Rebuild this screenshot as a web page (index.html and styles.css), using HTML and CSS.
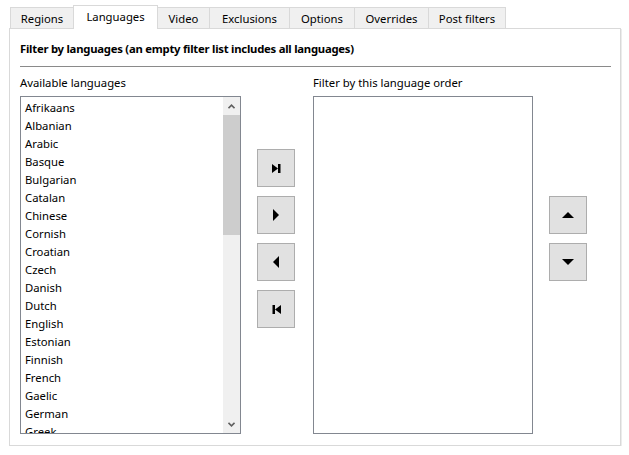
FILE: index.html
```html
<!DOCTYPE html>
<html>
<head>
<meta charset="utf-8">
<link rel="stylesheet" href="styles.css">
</head>
<body>
<div class="tabs">
  <div class="tab t1">Regions</div>
  <div class="tab t2 active">Languages</div>
  <div class="tab t3">Video</div>
  <div class="tab t4">Exclusions</div>
  <div class="tab t5">Options</div>
  <div class="tab t6">Overrides</div>
  <div class="tab t7">Post filters</div>
</div>
<div class="panel">
  <div class="heading">Filter by languages (an empty filter list includes all languages)</div>
  <div class="separator"></div>
  <div class="row">
    <div class="col">
      <div class="label">Available languages</div>
      <div class="list">
        <div class="items">
          <div class="item">Afrikaans</div>
          <div class="item">Albanian</div>
          <div class="item">Arabic</div>
          <div class="item">Basque</div>
          <div class="item">Bulgarian</div>
          <div class="item">Catalan</div>
          <div class="item">Chinese</div>
          <div class="item">Cornish</div>
          <div class="item">Croatian</div>
          <div class="item">Czech</div>
          <div class="item">Danish</div>
          <div class="item">Dutch</div>
          <div class="item">English</div>
          <div class="item">Estonian</div>
          <div class="item">Finnish</div>
          <div class="item">French</div>
          <div class="item">Gaelic</div>
          <div class="item">German</div>
          <div class="item">Greek</div>
        </div>
        <div class="scrollbar">
          <div class="sb-btn">
            <svg width="7" height="5" viewBox="0 0 7 5"><polyline points="0.5,4.2 3.5,1.2 6.5,4.2" fill="none" stroke="#606060" stroke-width="1.6"/></svg>
          </div>
          <div class="thumb"></div>
          <div class="track"></div>
          <div class="sb-btn">
            <svg width="7" height="5" viewBox="0 0 7 5"><polyline points="0.5,0.8 3.5,3.8 6.5,0.8" fill="none" stroke="#606060" stroke-width="1.6"/></svg>
          </div>
        </div>
      </div>
    </div>
    <div class="movers">
      <button class="btn" title="Add all">
        <svg width="9" height="9" viewBox="0 0 9 9"><polygon points="0,0 6,4.5 0,9" fill="#000"/><rect x="6" y="0" width="2.5" height="9" fill="#000"/></svg>
      </button>
      <button class="btn" title="Add">
        <svg width="6" height="12" viewBox="0 0 6 12"><polygon points="0,0 6,6 0,12" fill="#000"/></svg>
      </button>
      <button class="btn" title="Remove">
        <svg width="6" height="12" viewBox="0 0 6 12"><polygon points="6,0 0,6 6,12" fill="#000"/></svg>
      </button>
      <button class="btn" title="Remove all">
        <svg width="9" height="9" viewBox="0 0 9 9"><rect x="0.5" y="0" width="2.5" height="9" fill="#000"/><polygon points="9,0 3,4.5 9,9" fill="#000"/></svg>
      </button>
    </div>
    <div class="col">
      <div class="label">Filter by this language order</div>
      <div class="list empty"></div>
    </div>
    <div class="order">
      <button class="btn" title="Move up">
        <svg width="12" height="6" viewBox="0 0 12 6"><polygon points="0,6 6,0 12,6" fill="#000"/></svg>
      </button>
      <button class="btn" title="Move down">
        <svg width="12" height="6" viewBox="0 0 12 6"><polygon points="0,0 6,6 12,0" fill="#000"/></svg>
      </button>
    </div>
  </div>
</div>
</body>
</html>
```

FILE: styles.css
```css
html, body {
  margin: 0;
  background: #ffffff;
}
body {
  padding: 5px 0 0 9px;
  font-family: "Segoe UI", "Noto Sans", sans-serif;
  font-size: 11.3px;
  color: #000;
}
.tabs {
  display: flex;
  align-items: flex-end;
  height: 23px;
  padding-left: 1px;
  position: relative;
  z-index: 2;
}
.tab {
  box-sizing: border-box;
  height: 21px;
  border: 1px solid #d9d9d9;
  border-bottom: none;
  background: #f0f0f0;
  margin-left: -1px;
  display: flex;
  align-items: center;
  justify-content: center;
  padding-top: 1px;
}
.tab:first-child { margin-left: 0; }
.tab.active {
  height: 24px;
  margin-bottom: -1px;
  background: #ffffff;
  position: relative;
  z-index: 1;
  padding-top: 0;
  padding-bottom: 2px;
}
.t1 { width: 64px; }
.t2 { width: 85px; }
.t3 { width: 53px; }
.t4 { width: 81px; }
.t5 { width: 66px; }
.t6 { width: 75px; }
.t7 { width: 78px; }

.panel {
  box-sizing: border-box;
  width: 612px;
  height: 418px;
  border: 1px solid #d9d9d9;
  box-shadow: 1px 1px 0 #ececec;
  background: #ffffff;
  padding: 12px 9px 0 10px;
}
.heading {
  font-weight: bold;
  line-height: 16px;
  letter-spacing: -0.24px;
}
.separator {
  margin-top: 9px;
  height: 1px;
  background: #8a8a8a;
}
.row {
  display: flex;
  margin-top: 8px;
}
.col {
  display: flex;
  flex-direction: column;
}
.label {
  line-height: 16px;
  margin-bottom: 5px;
}
.list {
  box-sizing: border-box;
  width: 221px;
  height: 338px;
  border: 1px solid #828790;
  background: #fff;
  display: flex;
  overflow: hidden;
}
.list.empty { width: 220px; }
.items {
  flex: 1;
  padding: 2px 0 0 4px;
  overflow: hidden;
}
.item {
  line-height: 18px;
  white-space: nowrap;
}
.scrollbar {
  width: 17px;
  display: flex;
  flex-direction: column;
  background: #f0f0f0;
}
.sb-btn {
  height: 18px;
  display: flex;
  align-items: center;
  justify-content: center;
}
.thumb {
  height: 120px;
  background: #cdcdcd;
}
.track { flex: 1; }

.movers, .order {
  display: flex;
  flex-direction: column;
  gap: 9px;
}
.movers {
  padding-top: 74px;
  margin: 0 18px 0 16px;
}
.order {
  padding-top: 121px;
  margin-left: 16px;
}
.btn {
  box-sizing: border-box;
  width: 38px;
  height: 38px;
  margin: 0;
  padding: 0;
  border: 1px solid #adadad;
  background: #e1e1e1;
  display: flex;
  align-items: center;
  justify-content: center;
}
.btn svg { display: block; }
```
